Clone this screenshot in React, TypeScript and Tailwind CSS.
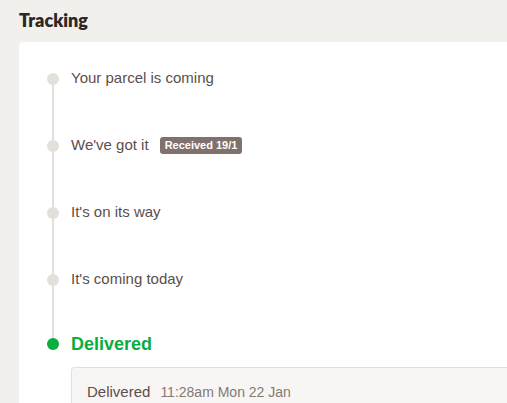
import React from "react";

const steps = [
  { label: "Your parcel is coming" },
  { label: "We've got it", badge: "Received 19/1" },
  { label: "It's on its way" },
  { label: "It's coming today" },
];

export default function App() {
  return (
    <div
      className="w-[507px] h-[403px] overflow-hidden bg-[#f2f0ec]"
      style={{ fontFamily: '"Liberation Sans", Arial, sans-serif' }}
    >
      <h1
        className="pl-[19px] pt-[9px] h-[42px] text-[18px] text-[#2f2624] leading-[22px]"
        style={{ fontFamily: 'Lato, "Liberation Sans", sans-serif', fontWeight: 800 }}
      >
        Tracking
      </h1>
      <div className="ml-[19px] w-[520px] h-[400px] bg-white rounded-tl-[4px]">
        <div className="relative pt-[3px]">
          <div className="absolute left-[33px] top-[36px] w-[2px] h-[266px] bg-[#e3e0dc]" />
          {steps.map((s) => (
            <div key={s.label} className="relative h-[67px] flex items-center pl-[28px]">
              <span className="w-[12px] h-[12px] rounded-full bg-[#e3e0dc] shrink-0" />
              <span className="ml-[12px] text-[15px] text-[#5b4f4b]">{s.label}</span>
              {s.badge && (
                <span className="ml-[11px] px-[5px] h-[17px] flex items-center rounded-[3px] bg-[#7f716c] text-white text-[11px] font-bold">
                  {s.badge}
                </span>
              )}
            </div>
          ))}
          <div className="relative mt-[8px] h-[46px] flex items-center pl-[28px]">
            <span className="w-[12px] h-[12px] rounded-full bg-[#0aad3f] shrink-0" />
            <span className="ml-[12px] text-[18px] font-bold text-[#0aad3f]">Delivered</span>
          </div>
          <div className="ml-[52px] h-[60px] bg-[#f8f6f4] border border-[#e3e0dc] rounded-tl-[3px] pl-[15px] pt-[13px] flex items-baseline">
            <span className="text-[15px] text-[#5b4f4b]">Delivered</span>
            <span className="ml-[10px] text-[14px] text-[#857974]">11:28am Mon 22 Jan</span>
          </div>
        </div>
      </div>
    </div>
  );
}
